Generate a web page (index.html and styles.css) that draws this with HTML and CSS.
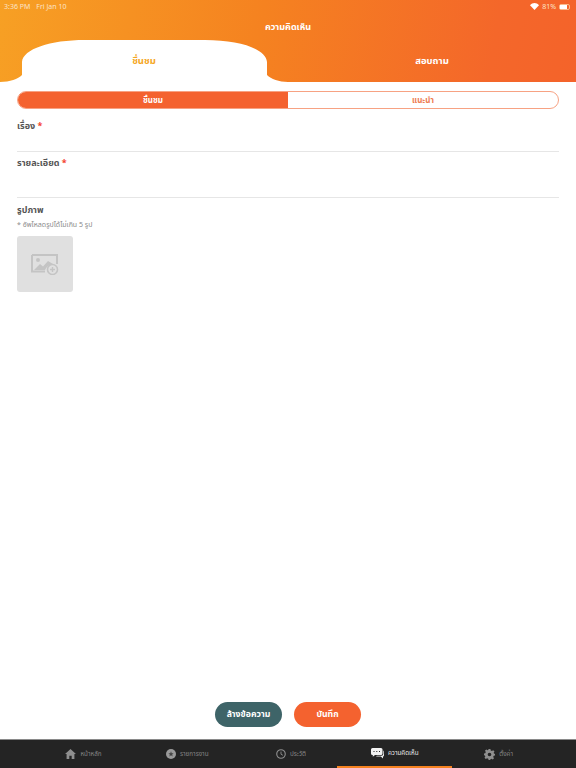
FILE: index.html
```html
<!DOCTYPE html>
<html lang="th">
<head>
    <meta charset="UTF-8">
    <meta name="viewport" content="width=device-width, initial-scale=1">
    <title>ความคิดเห็น</title>
    <link rel="stylesheet" href="styles.css">
</head>
<body>
    <div class="wrapper">
        <div class="header">
            <div class="status-bar">
                <div class="status-left"><span>3:36 PM</span><span>Fri Jan 10</span></div>
                <div class="status-right">
                    <svg class="wifi" width="9" height="7" viewBox="0 0 18 14">
                        <path d="M9 14 L0 4.5 C5 -1.5 13 -1.5 18 4.5 Z" fill="#fff"></path>
                    </svg>
                    <span>81%</span>
                    <div class="battery"><div class="battery-level"></div></div>
                </div>
            </div>
            <div class="title">ความคิดเห็น</div>
            <div class="tabs">
                <div class="tab active">
                    <svg class="tab-shape" width="288" height="42" viewBox="0 0 288 42">
                        <path d="M0 42 C10 42 18 39 22 35 L22 22 C23 9 50 0 85 0 L205 0 C240 0 266 9 267 22 L267 35 C271 39 279 42 288 42 Z" fill="#fff"></path>
                    </svg>
                    <span>ชื่นชม</span>
                </div>
                <div class="tab"><span>สอบถาม</span></div>
            </div>
        </div>

        <div class="main">
            <div class="segment">
                <div class="segment-item selected">ชื่นชม</div>
                <div class="segment-item">แนะนำ</div>
            </div>

            <div class="field field-title">
                <label>เรื่อง <span class="required">*</span></label>
            </div>
            <div class="field field-detail">
                <label>รายละเอียด <span class="required">*</span></label>
            </div>

            <div class="photos">
                <label>รูปภาพ</label>
                <p class="hint">* อัพโหลดรูปได้ไม่เกิน 5 รูป</p>
                <div class="photo-add">
                    <svg width="28" height="21" viewBox="0 0 28 21">
                        <path d="M1 1 H26 V10 M14 17.5 H1 V1" fill="none" stroke="#c4c4c4" stroke-width="2"></path>
                        <circle cx="7" cy="6" r="2" fill="#c4c4c4"></circle>
                        <path d="M3 16 L9 10 L12 12.5 L17 7 L22 10 C18 11 15 13 14 16 Z" fill="#c4c4c4"></path>
                        <circle cx="21.5" cy="15.5" r="5" fill="none" stroke="#c4c4c4" stroke-width="1.6"></circle>
                        <path d="M21.5 13 V18 M19 15.5 H24" stroke="#c4c4c4" stroke-width="1.4"></path>
                    </svg>
                </div>
            </div>
        </div>

        <div class="actions">
            <button class="btn btn-clear">ล้างข้อความ</button>
            <button class="btn btn-save">บันทึก</button>
        </div>

        <div class="tabbar">
            <div class="tabbar-item">
                <svg width="11" height="10" viewBox="0 0 12 11">
                    <path d="M6 0 L12 5.5 H10.3 V11 H7.3 V7.3 H4.7 V11 H1.7 V5.5 H0 Z" fill="#8f8f8f"></path>
                </svg>
                <span>หน้าหลัก</span>
            </div>
            <div class="tabbar-item">
                <svg width="10" height="10" viewBox="0 0 11 11">
                    <circle cx="5.5" cy="5.5" r="5.5" fill="#9a9a9a"></circle>
                    <path d="M5.5 2.6 L6.3 4.7 L8.4 4.8 L6.8 6.1 L7.3 8.2 L5.5 7 L3.7 8.2 L4.2 6.1 L2.6 4.8 L4.7 4.7 Z" fill="#444"></path>
                </svg>
                <span>รายการงาน</span>
            </div>
            <div class="tabbar-item">
                <svg width="10" height="10" viewBox="0 0 11 11">
                    <circle cx="5.5" cy="5.5" r="4.7" fill="none" stroke="#8f8f8f" stroke-width="1.2"></circle>
                    <path d="M5.5 2.8 V5.7 L7.6 6.9" fill="none" stroke="#8f8f8f"></path>
                </svg>
                <span>ประวัติ</span>
            </div>
            <div class="tabbar-item current">
                <svg width="13" height="11" viewBox="0 0 13 11">
                    <path d="M1.5 0 H10 Q11.5 0 11.5 1.5 V5.5 Q11.5 7 10 7 H4 L1.8 8.8 V7 H1.5 Q0 7 0 5.5 V1.5 Q0 0 1.5 0 Z" fill="#f2f2f2"></path>
                    <path d="M2.5 3.5 H3.5 M5.3 3.5 H6.3 M8 3.5 H9" stroke="#242424" stroke-width="1"></path>
                    <path d="M12.3 2.5 Q13 2.8 13 3.8 V7.5 Q13 8.6 12 8.6 V10.6 L9.8 8.6 H5 L5.8 7.8 H10.5 Q12.3 7.8 12.3 6 Z" fill="#f2f2f2"></path>
                </svg>
                <span>ความคิดเห็น</span>
            </div>
            <div class="tabbar-item">
                <svg width="11" height="11" viewBox="0 0 24 24">
                    <path fill-rule="evenodd" d="M10 0 H14 L14.7 3.2 L17.3 4.3 L20.1 2.5 L22.9 5.3 L21.1 8.1 L22.2 10.7 L24 10 V14 L21.2 14.7 L20.1 17.3 L21.9 20.1 L19.1 22.9 L16.3 21.1 L13.7 22.2 L14 24 H10 L9.3 21.2 L6.7 20.1 L3.9 21.9 L1.1 19.1 L2.9 16.3 L1.8 13.7 L0 14 V10 L2.8 9.3 L3.9 6.7 L2.1 3.9 L4.9 1.1 L7.7 2.9 L9.3 2.2 Z M12 8 A4 4 0 1 0 12 16 A4 4 0 1 0 12 8 Z" fill="#8f8f8f"></path>
                </svg>
                <span>ตั้งค่า</span>
            </div>
        </div>
    </div>
</body>
</html>
```

FILE: styles.css
```css
html, body {
    height: 100%;
}

body {
    margin: 0;
    padding: 0;
    font-family: 'Noto Sans', 'Noto Sans Thai', 'Liberation Sans', sans-serif;
    color: #555;
    background-color: #fff;
}

.wrapper {
    min-height: 100%;
    display: flex;
    flex-direction: column;
}

.header {
    height: 82px;
    background: linear-gradient(100deg, #f7a024 0%, #f58220 45%, #f4672a 85%, #f4632a 100%);
    color: #fff;
    display: flex;
    flex-direction: column;
}

.status-bar {
    height: 11px;
    padding: 1px 6px 0 4px;
    display: flex;
    justify-content: space-between;
    align-items: center;
    font-size: 7px;
    color: #fce3c8;
}

    .status-bar .status-left {
        display: flex;
        gap: 6px;
    }

    .status-bar .status-right {
        display: flex;
        align-items: center;
        gap: 3px;
    }

.battery {
    width: 11px;
    height: 6px;
    border: 1px solid #fbb98a;
    border-radius: 2px;
    box-sizing: border-box;
}

.battery-level {
    width: 80%;
    height: 100%;
    background-color: #fff;
}

.title {
    margin-top: 9px;
    text-align: center;
    font-size: 9px;
    font-weight: 700;
    line-height: 12px;
}

.tabs {
    margin-top: auto;
    height: 42px;
    display: flex;
}

.tab {
    position: relative;
    flex: 1 0;
    display: flex;
    justify-content: center;
    align-items: center;
    font-size: 9.5px;
    font-weight: 700;
    padding-bottom: 1px;
    box-sizing: border-box;
}

    .tab.active {
        color: #f5a623;
    }

    .tab span {
        position: relative;
    }

.tab-shape {
    position: absolute;
    left: 0;
    top: 0;
}

.main {
    flex-grow: 1;
    padding: 9px 17px 0;
}

.segment {
    display: flex;
    height: 18px;
    border: 1px solid #f7a283;
    border-radius: 9px;
    box-sizing: border-box;
    overflow: hidden;
}

.segment-item {
    flex: 1 0;
    text-align: center;
    font-size: 8px;
    font-weight: 700;
    line-height: 16px;
    color: #ee7a50;
}

    .segment-item.selected {
        background-color: #f4622f;
        color: #fff;
    }

label {
    display: block;
    font-size: 9px;
    font-weight: 700;
    line-height: 12px;
    color: #555;
}

.required {
    color: #f4402a;
}

.field {
    border-bottom: 1px solid #e6e6e6;
    box-sizing: border-box;
}

.field-title {
    height: 43px;
    padding-top: 11px;
}

.field-detail {
    height: 46px;
    padding-top: 5px;
}

.photos {
    padding-top: 6px;
}

.hint {
    margin: 4px 0 6px;
    font-size: 7px;
    line-height: 10px;
    color: #8a8a8a;
}

.photo-add {
    width: 56px;
    height: 56px;
    border-radius: 3px;
    background-color: #e0e0e0;
    display: flex;
    justify-content: center;
    align-items: center;
}

.actions {
    display: flex;
    justify-content: center;
    gap: 12px;
    padding-bottom: 12px;
}

.btn {
    width: 67px;
    height: 25px;
    border: none;
    border-radius: 13px;
    padding: 0;
    font-family: inherit;
    font-size: 8.7px;
    font-weight: 700;
    color: #fff;
}

.btn-clear {
    background-color: #3e6468;
}

.btn-save {
    background-color: #f4622f;
}

.tabbar {
    height: 29px;
    background-color: #242424;
    border-top: 1px solid #8a8a8a;
    box-sizing: border-box;
    display: flex;
    padding-left: 31.6px;
}

.tabbar-item {
    width: 103.75px;
    height: 100%;
    box-sizing: border-box;
    display: flex;
    justify-content: center;
    align-items: center;
    gap: 4px;
    font-size: 6.3px;
    color: #858585;
}

    .tabbar-item.current {
        width: 115px;
        margin: 0 -5.6px;
        color: #e8e8e8;
        border-bottom: 2px solid #f58220;
    }
```
